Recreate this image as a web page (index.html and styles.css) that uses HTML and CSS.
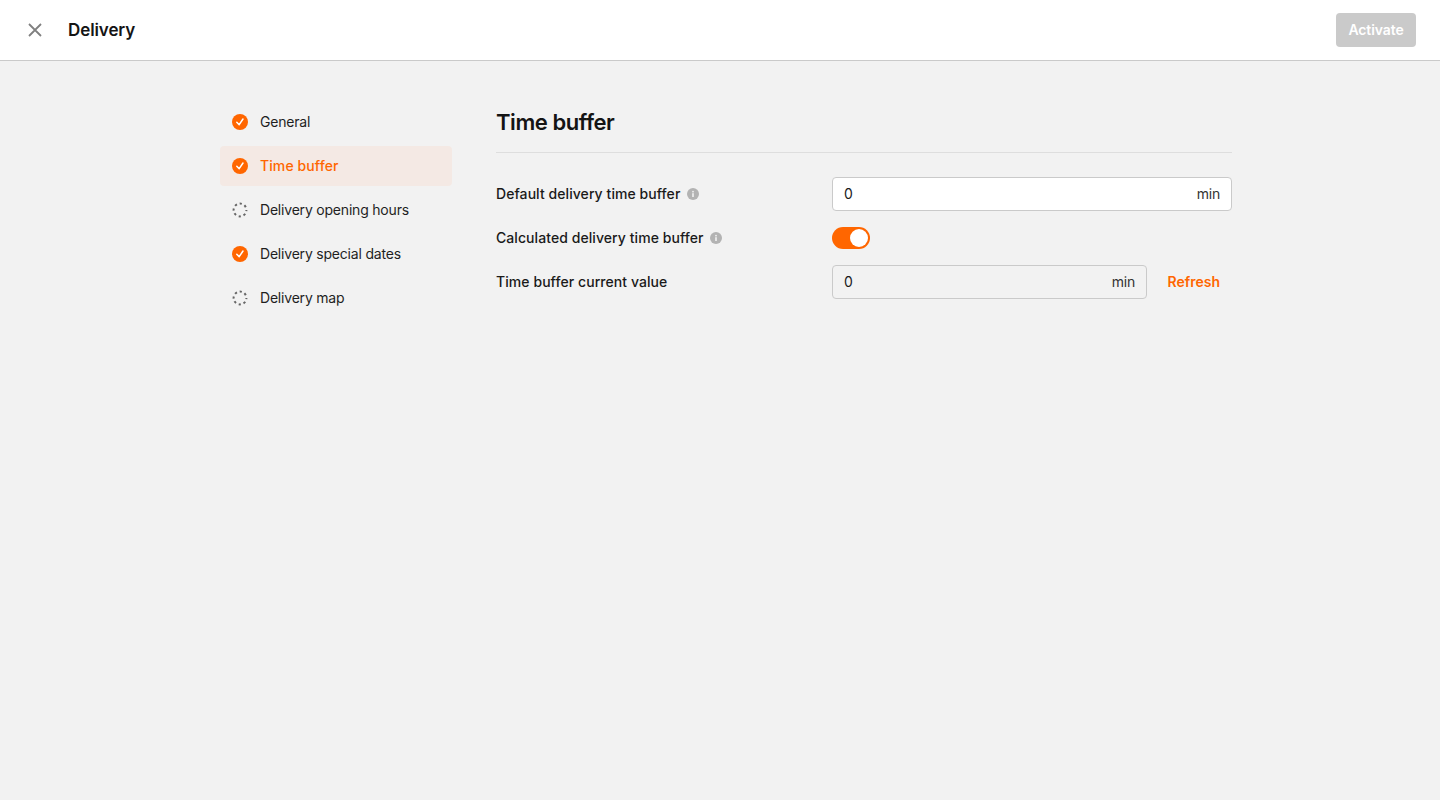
FILE: index.html
```html
<!DOCTYPE html>
<html lang="en">
<head>
<meta charset="utf-8">
<title>Delivery</title>
<link rel="stylesheet" href="styles.css">
</head>
<body>
<header class="topbar">
  <div class="topbar-left">
    <button class="close" aria-label="Close">
      <svg width="16" height="16" viewBox="0 0 16 16"><path d="M2 2L14 14M14 2L2 14" stroke="#808080" stroke-width="1.8" fill="none"/></svg>
    </button>
    <h1 class="topbar-title">Delivery</h1>
  </div>
  <button class="activate">Activate</button>
</header>
<div class="layout">
  <nav class="steps">
    <a class="step">
      <svg class="step-icon" viewBox="0 0 16 16"><circle cx="8" cy="8" r="8" fill="#ff6600"/><path d="M4.8 8.2L7.2 10.7L11 5" stroke="#fff" stroke-width="1.5" fill="none" stroke-linecap="round" stroke-linejoin="round"/></svg>
      General
    </a>
    <a class="step step-active">
      <svg class="step-icon" viewBox="0 0 16 16"><circle cx="8" cy="8" r="8" fill="#ff6600"/><path d="M4.8 8.2L7.2 10.7L11 5" stroke="#fff" stroke-width="1.5" fill="none" stroke-linecap="round" stroke-linejoin="round"/></svg>
      Time buffer
    </a>
    <a class="step">
      <svg class="step-icon" viewBox="0 0 16 16"><circle cx="8" cy="8" r="6.4" stroke="#666" stroke-width="2" fill="none" stroke-dasharray="2.2 2.827" stroke-dashoffset="1.1"/></svg>
      Delivery opening hours
    </a>
    <a class="step">
      <svg class="step-icon" viewBox="0 0 16 16"><circle cx="8" cy="8" r="8" fill="#ff6600"/><path d="M4.8 8.2L7.2 10.7L11 5" stroke="#fff" stroke-width="1.5" fill="none" stroke-linecap="round" stroke-linejoin="round"/></svg>
      Delivery special dates
    </a>
    <a class="step">
      <svg class="step-icon" viewBox="0 0 16 16"><circle cx="8" cy="8" r="6.4" stroke="#666" stroke-width="2" fill="none" stroke-dasharray="2.2 2.827" stroke-dashoffset="1.1"/></svg>
      Delivery map
    </a>
  </nav>
  <main class="panel">
    <h2 class="panel-title">Time buffer</h2>
    <div class="rows">
      <div class="row">
        <div class="label">Default delivery time buffer
          <svg class="info" viewBox="0 0 12 12"><circle cx="6" cy="6" r="6" fill="#b3b3b3"/><rect x="5.2" y="5.2" width="1.6" height="3.8" fill="#f2f2f2"/><rect x="5.2" y="2.9" width="1.6" height="1.5" fill="#f2f2f2"/></svg>
        </div>
        <div class="field field-full"><span>0</span><span class="unit">min</span></div>
      </div>
      <div class="row">
        <div class="label">Calculated delivery time buffer
          <svg class="info" viewBox="0 0 12 12"><circle cx="6" cy="6" r="6" fill="#b3b3b3"/><rect x="5.2" y="5.2" width="1.6" height="3.8" fill="#f2f2f2"/><rect x="5.2" y="2.9" width="1.6" height="1.5" fill="#f2f2f2"/></svg>
        </div>
        <div class="toggle"><span class="knob"></span></div>
      </div>
      <div class="row">
        <div class="label">Time buffer current value</div>
        <div class="field field-readonly"><span>0</span><span class="unit">min</span></div>
        <a class="refresh">Refresh</a>
      </div>
    </div>
  </main>
</div>
</body>
</html>
```
FILE: styles.css
```css
* { box-sizing: border-box; }
html, body { margin: 0; height: 100%; }
body {
  background: #f2f2f2;
  font-family: Inter, "Liberation Sans", sans-serif;
  font-size: 14px;
  line-height: 20px;
  letter-spacing: -0.2px;
  color: #1a1a1a;
}
.topbar {
  height: 61px;
  background: #fff;
  border-bottom: 1px solid #cacaca;
  display: flex;
  align-items: center;
  justify-content: space-between;
  padding: 0 24px 1px 27px;
}
.topbar-left { display: flex; align-items: center; gap: 25px; }
.close {
  width: 16px; height: 16px; padding: 0; border: 0; background: none;
  display: block;
}
.close svg { display: block; }
.topbar-title { margin: 0; font-size: 17px; font-weight: 600; line-height: 24px; letter-spacing: -0.1px; color: #141414; }
.activate {
  width: 80px; height: 34px;
  border: 0; border-radius: 4px;
  background: #cacaca; color: #fff;
  font: 600 14px/20px Inter, "Liberation Sans", sans-serif;
  letter-spacing: -0.1px;
  padding: 0;
}
.layout {
  display: flex;
  gap: 44px;
  width: 1012px;
  margin-left: 220px;
  padding-top: 41px;
}
.steps { width: 232px; display: flex; flex-direction: column; gap: 4px; }
.step {
  height: 40px;
  display: flex;
  align-items: center;
  gap: 12px;
  padding-left: 12px;
  border-radius: 4px;
  color: #1f1f1f;
}
.step-active { background: #f4e9e4; color: #ff6600; font-weight: 500; letter-spacing: 0.1px; }
.step-icon { width: 16px; height: 16px; flex: none; }
.panel { width: 736px; }
.panel-title {
  margin: 0;
  height: 51px;
  padding-top: 5px;
  font-size: 22px; line-height: 30px; font-weight: 600;
  letter-spacing: -0.45px;
  color: #141414;
  border-bottom: 1px solid #dedede;
}
.rows { display: flex; flex-direction: column; gap: 10px; padding-top: 24px; }
.row { display: flex; align-items: center; height: 34px; }
.label {
  width: 336px; flex: none;
  display: flex; align-items: center; gap: 6.5px;
  font-weight: 500; letter-spacing: 0.07px; color: #1a1a1a;
}
.info { width: 12px; height: 12px; flex: none; }
.field {
  height: 34px;
  display: flex; align-items: center; justify-content: space-between;
  padding: 0 11px;
  border: 1px solid #cacaca;
  border-radius: 4px;
}
.field-full { width: 400px; background: #fff; }
.field-readonly { width: 315px; background: #f2f2f2; }
.unit { color: #333; }
.toggle {
  width: 38px; height: 22px;
  border-radius: 11px;
  background: #ff6600;
  display: flex; align-items: center; justify-content: flex-end;
  padding-right: 2px;
}
.knob { width: 18px; height: 18px; border-radius: 50%; background: #fff; }
.refresh { margin-left: 20.5px; color: #ff6600; font-weight: 600; letter-spacing: 0; }
```
